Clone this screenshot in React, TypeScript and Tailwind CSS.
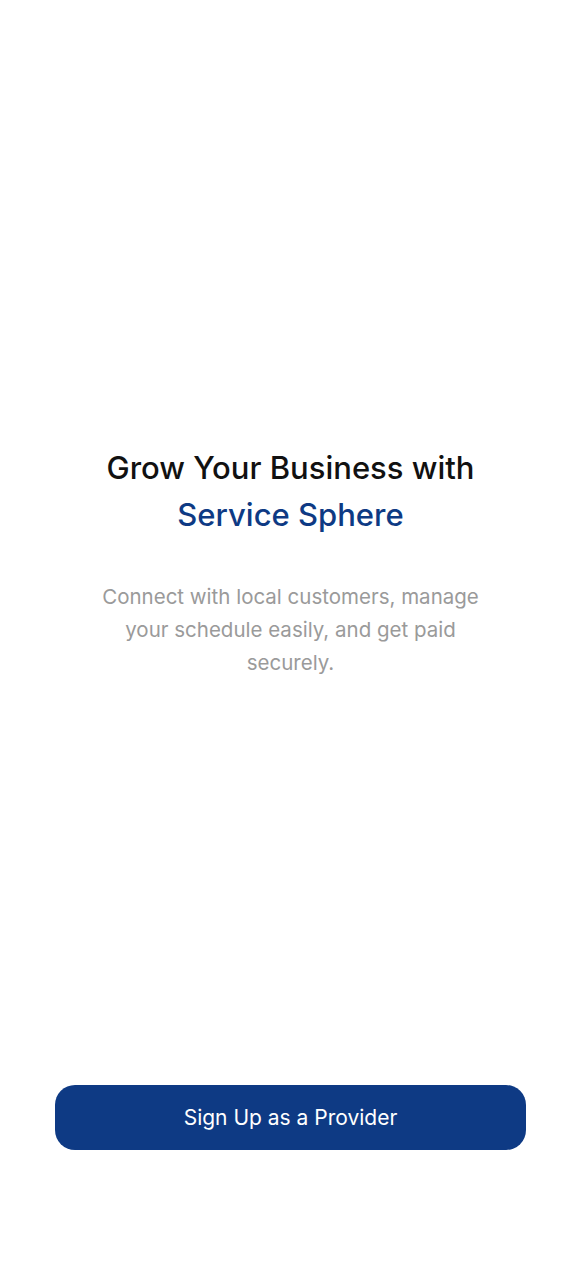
export default function App() {
  return (
    <div className="flex h-[1280px] w-full flex-col bg-white font-['Inter',sans-serif]">
      {/* Headline + copy */}
      <div className="flex flex-col items-center px-[56px] pt-[444px] text-center">
        <h1 className="text-[31px] font-medium leading-[47px] text-[#111111]">
          Grow Your Business with
          <br />
          <span className="text-[#0e3a84]">Service Sphere</span>
        </h1>
        <p className="mt-[42px] max-w-[390px] text-[20.5px] leading-[33px] text-[#9a9a9a]">
          Connect with local customers, manage your schedule easily, and get paid securely.
        </p>
      </div>

      {/* CTA */}
      <div className="mt-auto px-[55px] pb-[130px]">
        <button className="flex h-[65px] w-full items-center justify-center rounded-[20px] bg-[#0e3a84] text-[21px] text-white">
          Sign Up as a Provider
        </button>
      </div>
    </div>
  );
}
